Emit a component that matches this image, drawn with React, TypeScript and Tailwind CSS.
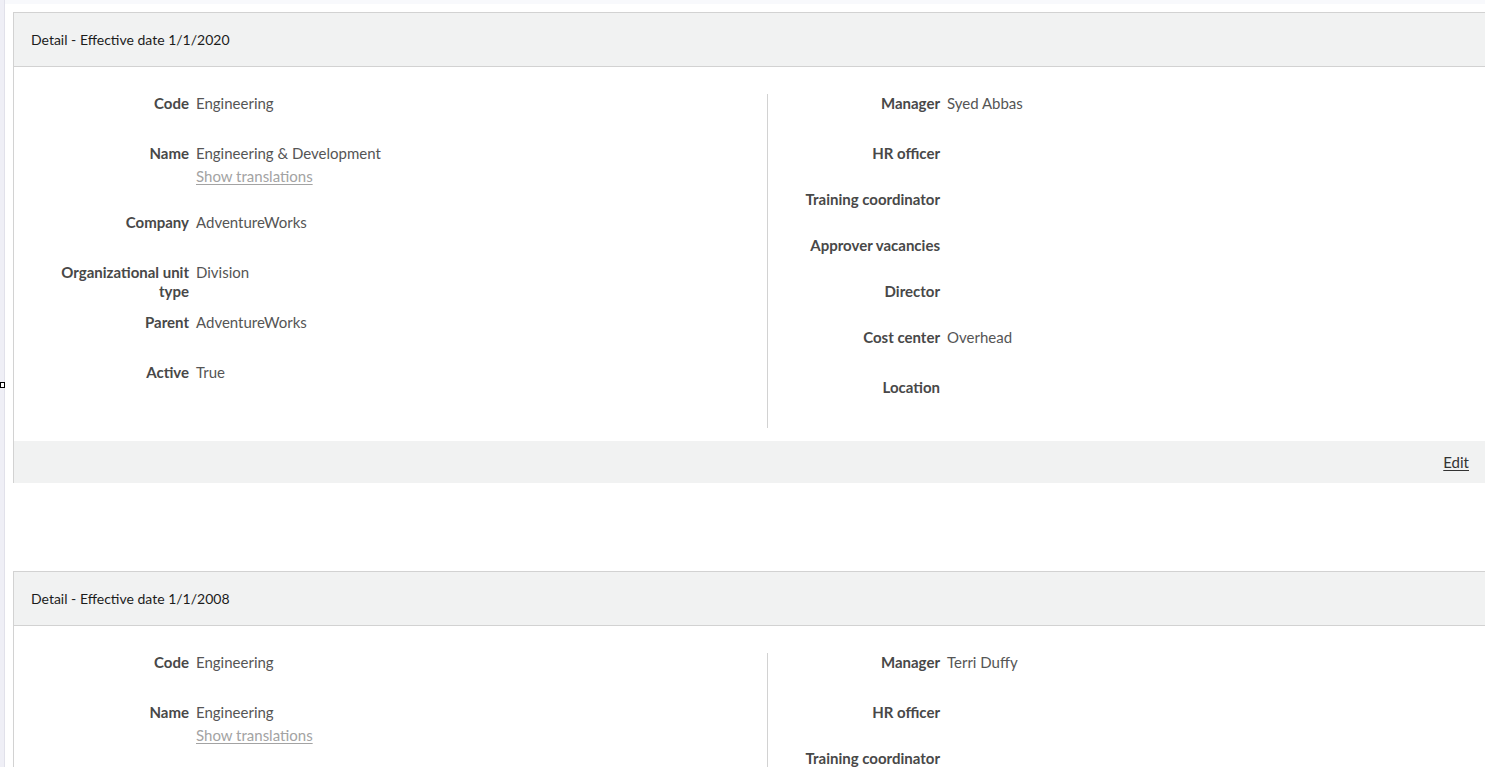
import React from 'react'

interface Field {
  label: string
  value?: string
  translations?: boolean
  h: string
}

interface Detail {
  date: string
  left: Field[]
  right: Field[]
}

const DETAILS: Detail[] = [
  {
    date: '1/1/2020',
    left: [
      { label: 'Code', value: 'Engineering', h: 'h-[50px]' },
      { label: 'Name', value: 'Engineering & Development', translations: true, h: 'h-[69px]' },
      { label: 'Company', value: 'AdventureWorks', h: 'h-[50px]' },
      { label: 'Organizational unit type', value: 'Division', h: 'h-[50px]' },
      { label: 'Parent', value: 'AdventureWorks', h: 'h-[50px]' },
      { label: 'Active', value: 'True', h: 'h-[50px]' },
    ],
    right: [
      { label: 'Manager', value: 'Syed Abbas', h: 'h-[50px]' },
      { label: 'HR officer', h: 'h-[46px]' },
      { label: 'Training coordinator', h: 'h-[46px]' },
      { label: 'Approver vacancies', h: 'h-[46px]' },
      { label: 'Director', h: 'h-[46px]' },
      { label: 'Cost center', value: 'Overhead', h: 'h-[50px]' },
      { label: 'Location', h: 'h-[46px]' },
    ],
  },
  {
    date: '1/1/2008',
    left: [
      { label: 'Code', value: 'Engineering', h: 'h-[50px]' },
      { label: 'Name', value: 'Engineering', translations: true, h: 'h-[69px]' },
      { label: 'Company', value: 'AdventureWorks', h: 'h-[50px]' },
      { label: 'Organizational unit type', value: 'Division', h: 'h-[50px]' },
      { label: 'Parent', value: 'AdventureWorks', h: 'h-[50px]' },
      { label: 'Active', value: 'True', h: 'h-[50px]' },
    ],
    right: [
      { label: 'Manager', value: 'Terri Duffy', h: 'h-[50px]' },
      { label: 'HR officer', h: 'h-[46px]' },
      { label: 'Training coordinator', h: 'h-[46px]' },
      { label: 'Approver vacancies', h: 'h-[46px]' },
      { label: 'Director', h: 'h-[46px]' },
      { label: 'Cost center', value: 'Overhead', h: 'h-[50px]' },
      { label: 'Location', h: 'h-[46px]' },
    ],
  },
]

function Row({ f, labelW }: { f: Field; labelW: string }) {
  return (
    <div className={`flex items-start ${f.h}`}>
      <div className={`${labelW} shrink-0 pl-[36px] pr-[7px] text-right font-bold text-[#484848] leading-[19px]`}>
        {f.label}
      </div>
      <div className="text-[#555] leading-[19px]">
        {f.value}
        {f.translations && (
          <div className="mt-[4px] text-[#a3a3a3] underline underline-offset-2">
            Show translations
          </div>
        )}
      </div>
    </div>
  )
}

function DetailCard({ d }: { d: Detail }) {
  return (
    <div className="w-[1500px] border-l border-t border-[#d2d2d2]">
      {/* Header */}
      <div className="h-[54px] bg-[#f1f2f2] border-b border-[#d2d2d2] flex items-center pl-[17px] text-[14px] text-[#1c1c1c]">
        Detail - Effective date {d.date}
      </div>

      {/* Body */}
      <div className="flex pt-[27px] pb-[13px] text-[15px]">
        <div className="w-[753px] shrink-0">
          {d.left.map((f) => (
            <Row key={f.label} f={f} labelW="w-[182px]" />
          ))}
        </div>
        <div className="border-l border-[#d2d2d2] h-[334px] flex-1">
          {d.right.map((f) => (
            <Row key={f.label} f={f} labelW="w-[179px]" />
          ))}
        </div>
      </div>

      {/* Footer */}
      <div className="h-[42px] bg-[#f1f2f2] w-[1472px] flex items-center justify-end pr-[17px] text-[15px]">
        <span className="text-[#333] underline underline-offset-2">Edit</span>
      </div>
    </div>
  )
}

export default function App() {
  return (
    <div
      className="relative h-screen w-full overflow-hidden bg-white flex"
      style={{ fontFamily: 'Lato, "Liberation Sans", sans-serif' }}
    >
      <div className="w-[5px] shrink-0 bg-[#efeff6] border-r border-[#e1e1ea]" />
      <div className="absolute left-0 top-[382px] w-[5px] h-[6px] border border-black bg-white" />
      <div className="flex-1 overflow-hidden">
        <div className="h-[4px] bg-[#f8f9fc]" />
        <div className="pl-[8px] pt-[8px] flex flex-col gap-[88px]">
          {DETAILS.map((d) => (
            <DetailCard key={d.date} d={d} />
          ))}
        </div>
      </div>
    </div>
  )
}
